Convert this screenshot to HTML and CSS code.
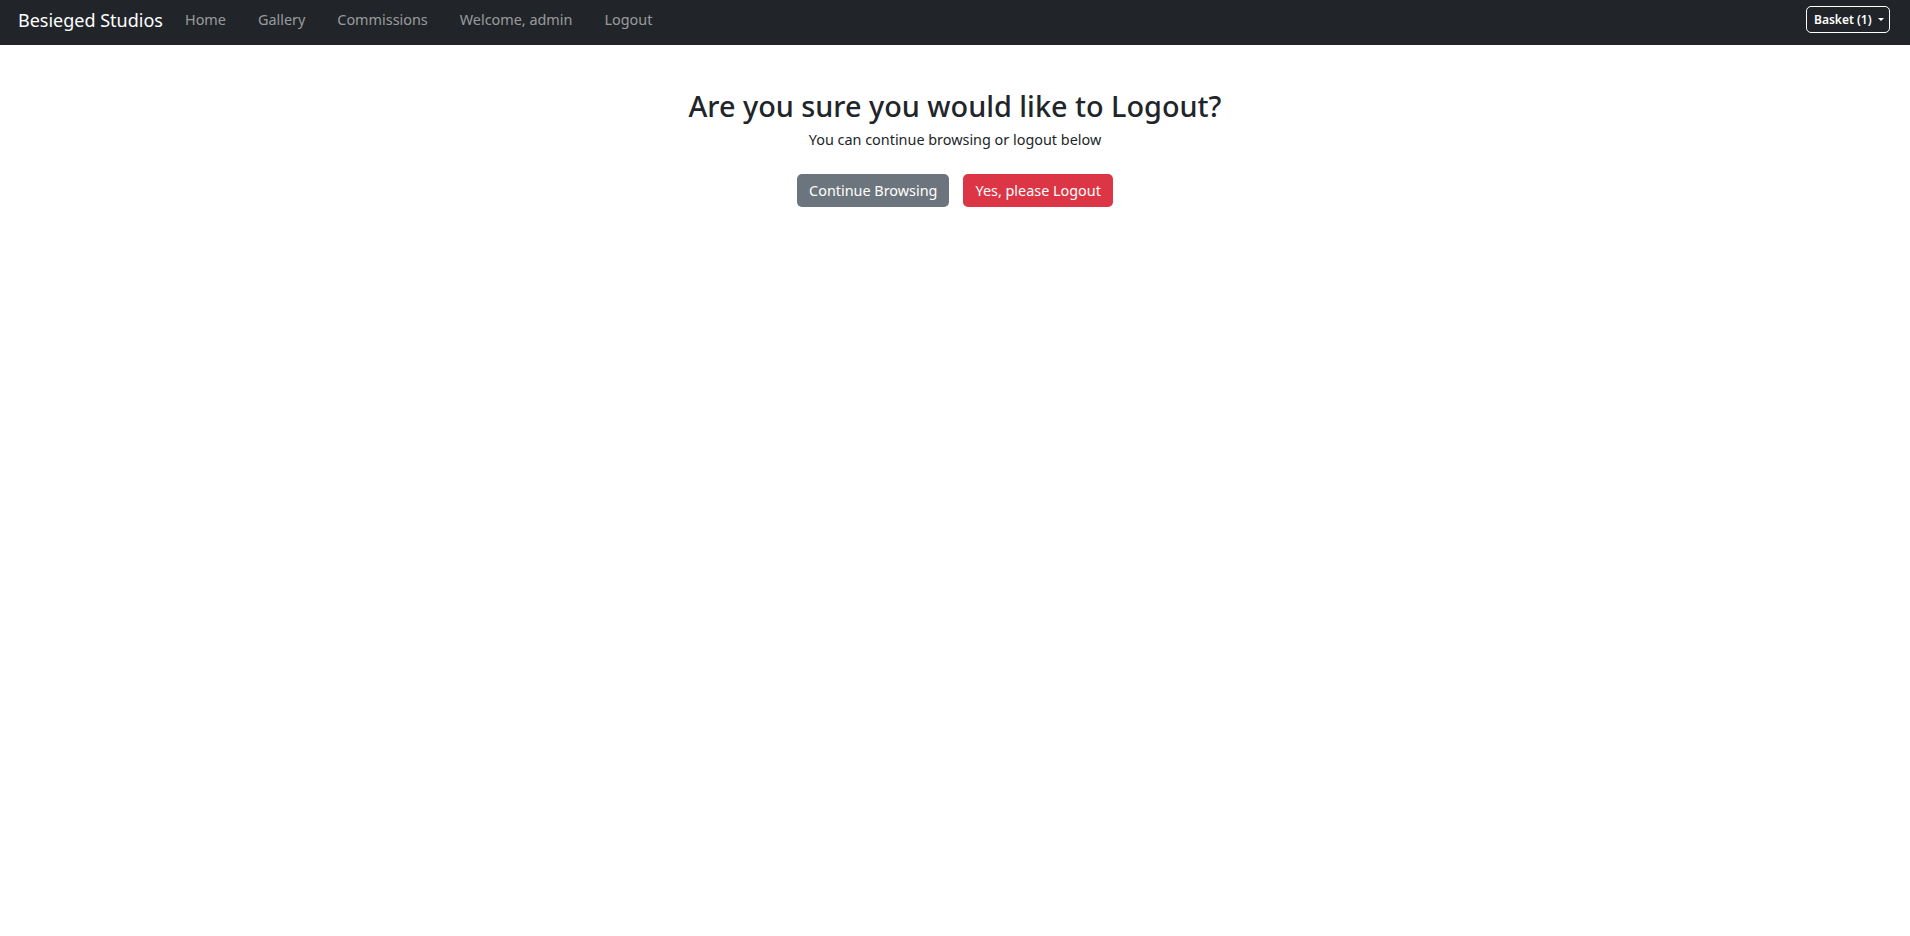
FILE: index.html
```html
<!DOCTYPE html>
<html lang="en">
<head>
<meta charset="utf-8">
<title>Logout - Besieged Studios</title>
<link rel="stylesheet" href="styles.css">
</head>
<body>
<nav class="navbar">
  <div class="nav-left">
    <a class="brand" href="#">Besieged Studios</a>
    <ul class="nav-links">
      <li><a href="#">Home</a></li>
      <li><a href="#">Gallery</a></li>
      <li><a href="#">Commissions</a></li>
      <li><a href="#">Welcome, admin</a></li>
      <li><a href="#">Logout</a></li>
    </ul>
  </div>
  <button class="basket" type="button">Basket (1) <span class="caret"></span></button>
</nav>
<main class="content">
  <h3 class="title">Are you sure you would like to Logout?</h3>
  <p class="subtitle">You can continue browsing or logout below</p>
  <div class="actions">
    <a class="btn btn-secondary" href="#">Continue Browsing</a>
    <a class="btn btn-danger" href="#">Yes, please Logout</a>
  </div>
</main>
</body>
</html>
```
FILE: styles.css
```css
* { box-sizing: border-box; }
html, body { margin: 0; padding: 0; }
body {
  font-family: "Noto Sans", "Liberation Sans", sans-serif;
  color: #212529;
  background: #fff;
  font-size: 14.4px;
}
a { text-decoration: none; }
.navbar {
  height: 45px;
  background: #212529;
  display: flex;
  align-items: center;
  justify-content: space-between;
  padding: 0 20px 6px 18px;
}
.nav-left { display: flex; align-items: center; }
.brand {
  color: #fff;
  font-size: 18px;
  margin-right: 6px;
}
.nav-links {
  list-style: none;
  margin: 0;
  padding: 0;
  display: flex;
}
.nav-links a {
  display: block;
  color: rgba(255,255,255,0.55);
  font-size: 14.4px;
  padding: 8px 16px;
}
.basket {
  font-family: inherit;
  background: transparent;
  color: #fff;
  border: 1px solid #fff;
  border-radius: 5px;
  font-size: 12px;
  font-weight: 600;
  width: 84px;
  height: 27px;
  padding: 0 0 0 7px;
  display: flex;
  align-items: center;
  gap: 6px;
}
.caret {
  width: 0; height: 0;
  border-left: 3.5px solid transparent;
  border-right: 3.5px solid transparent;
  border-top: 3.5px solid #fff;
}
.content {
  text-align: center;
  padding-top: 44px;
}
.title {
  font-size: 28.8px;
  font-weight: 500;
  line-height: 1.2;
  margin: 0 0 5px;
}
.subtitle {
  margin: 0 0 24px;
  line-height: 1.5;
}
.actions {
  display: flex;
  justify-content: center;
  gap: 14px;
}
.btn {
  display: inline-block;
  color: #fff;
  font-size: 14.4px;
  line-height: 21px;
  padding: 6px 12px;
  border-radius: 5px;
}
.btn-secondary { background: #6c757d; }
.btn-danger { background: #dc3545; }
```
